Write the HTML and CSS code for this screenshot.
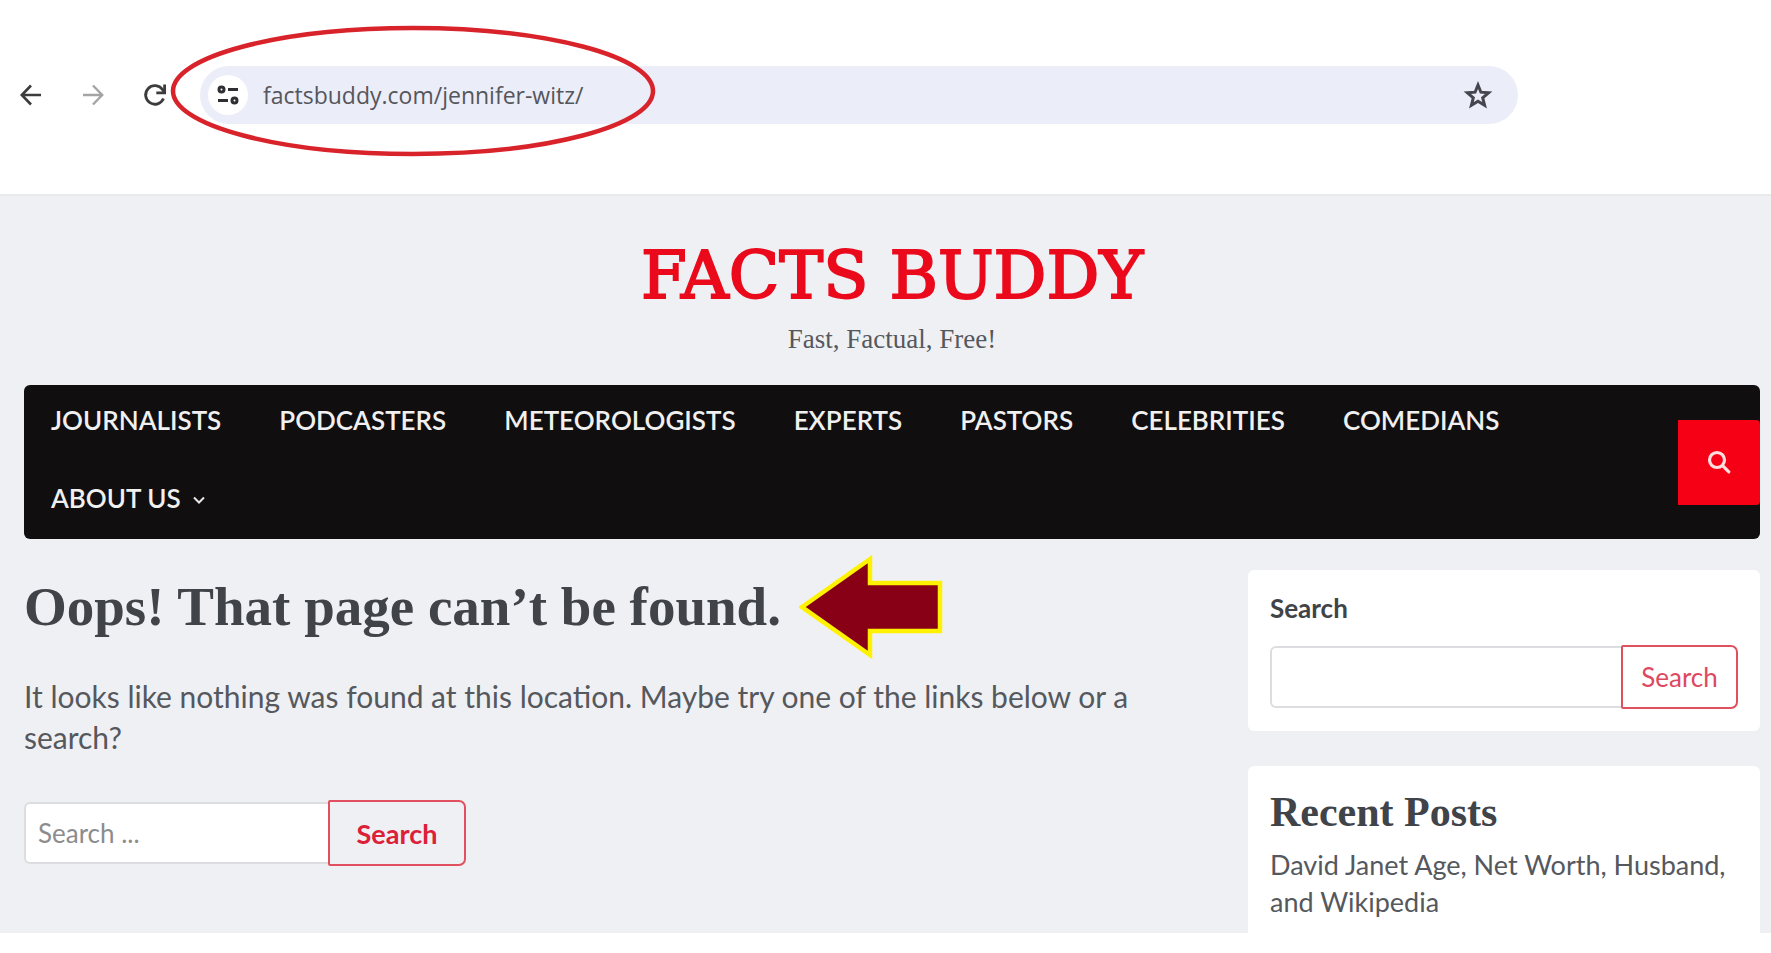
FILE: index.html
```
<!DOCTYPE html>
<html lang="en">
<head>
<meta charset="utf-8">
<title>Page not found - Facts Buddy</title>
<link rel="stylesheet" href="styles.css">
</head>
<body>
<div class="toolbar">
  <button class="tool" type="button" aria-label="Back">
    <svg width="24" height="24" viewBox="0 0 24 24" fill="none" stroke="#3c3c3e" stroke-width="2.6"><path d="M22 12H3M12 2.500 2.800 12l9.200 9.500"/></svg>
  </button>
  <button class="tool" type="button" aria-label="Forward">
    <svg width="24" height="24" viewBox="0 0 24 24" fill="none" stroke="#a4a4a6" stroke-width="2.4"><path d="M2 12h19M12 2.500 21.200 12 12 21.500"/></svg>
  </button>
  <button class="tool" type="button" aria-label="Reload">
    <svg width="24" height="24" viewBox="0 0 24 24" fill="none" stroke="#3c3c3e" stroke-width="2.800"><path d="M20.500 15.500A9.300 9.300 0 1 1 19.500 6.500L21 9"/><path d="M21.600 1.500v8.300h-8.300"/></svg>
  </button>
  <div class="omnibox">
    <button class="site-info" type="button" aria-label="View site information">
      <svg width="24" height="22" viewBox="0 0 24 22" fill="none" stroke="#2f2f33" stroke-width="3"><circle cx="5.500" cy="5.500" r="2.500"/><path d="M12 5.500h10M2 16.500h10"/><circle cx="18.500" cy="16.500" r="2.500"/></svg>
    </button>
    <input class="url" type="text" aria-label="Address" value="factsbuddy.com/jennifer-witz/">
    <button class="star" type="button" aria-label="Bookmark this page">
      <svg width="30" height="28" viewBox="0 0 30 28" fill="none" stroke="#46464e" stroke-width="3"><path d="M15 4l2.900 7.200 7.700.6-5.900 5 1.900 7.500L15 20.200l-6.600 4.100 1.900-7.500-5.900-5 7.700-.6z"/></svg>
    </button>
  </div>
</div>

<div class="site">
  <header class="masthead">
    <a class="brand" href="#">FACTS BUDDY</a>
    <p class="tagline">Fast, Factual, Free!</p>
  </header>

  <nav class="nav">
    <ul class="menu">
      <li><a href="#">JOURNALISTS</a></li>
      <li><a href="#">PODCASTERS</a></li>
      <li><a href="#">METEOROLOGISTS</a></li>
      <li><a href="#">EXPERTS</a></li>
      <li><a href="#">PASTORS</a></li>
      <li><a href="#">CELEBRITIES</a></li>
      <li><a href="#">COMEDIANS</a></li>
      <li><a href="#">ABOUT US<svg class="chevron" width="12" height="8" viewBox="0 0 12 8" fill="none" stroke="#e8e8e8" stroke-width="2"><path d="M1 1.500l5 5 5-5"/></svg></a></li>
    </ul>
    <button class="nav-search" type="button" aria-label="Open search">
      <svg width="24" height="24" viewBox="0 0 24 24" fill="none" stroke="#ffdede" stroke-width="3.200" stroke-linecap="round"><circle cx="10" cy="10" r="7.500"/><path d="M15.800 15.800l6 6"/></svg>
    </button>
  </nav>

  <div class="columns">
    <main class="content">
      <div class="heading-row">
        <h1>Oops! That page can’t be found.</h1>
        <svg class="arrow" width="145" height="106" viewBox="0 0 145 106"><path d="M3 53 71 5v24h70v48H71v24z" fill="#880015" stroke="#fff200" stroke-width="4.500"/></svg>
      </div>
      <p class="lead">It looks like nothing was found at this location. Maybe try one of the links below or a search?</p>
      <form class="search">
        <input class="field" type="search" aria-label="Search for" placeholder="Search ...">
        <button class="submit" type="button">Search</button>
      </form>
    </main>
    <aside class="sidebar">
      <form class="card">
        <label class="card-label" for="side-search">Search</label>
        <div class="side-search">
          <input class="field" id="side-search" type="search">
          <button class="submit" type="button">Search</button>
        </div>
      </form>
      <section class="card recent">
        <h2>Recent Posts</h2>
        <a href="#">David Janet Age, Net Worth, Husband, and Wikipedia</a>
      </section>
    </aside>
  </div>
</div>
<svg class="ring" width="486" height="132" viewBox="0 0 486 132" fill="none" stroke="#d9232b" stroke-width="4.500"><ellipse cx="243" cy="66" rx="240" ry="63"/></svg>
</body>
</html>
```
FILE: styles.css
```
* {
  box-sizing: border-box;
}

body {
  position: relative;
  display: flex;
  flex-direction: column;
  min-height: 100vh;
  margin: 0;
  padding-bottom: 20px;
  background: #fff;
  color: #55585d;
  font-family: Lato, "Open Sans", sans-serif;
}

button,
input {
  margin: 0;
  font: inherit;
}

a {
  color: inherit;
  text-decoration: none;
}

.toolbar {
  display: flex;
  align-items: center;
  gap: 38px;
  padding: 66px 253px 70px 19px;
}

.tool,
.site-info,
.star {
  display: flex;
  align-items: center;
  justify-content: center;
  padding: 0;
  border: 0;
  background: none;
}

.omnibox {
  display: flex;
  flex: 1;
  align-items: center;
  height: 58px;
  padding: 0 25px 0 8px;
  border-radius: 29px;
  background: #ebedf8;
}

.tool + .omnibox {
  margin-left: -5px;
}

.site-info {
  width: 40px;
  height: 40px;
  border-radius: 50%;
  background: #fff;
}

.url {
  flex: 1;
  min-width: 0;
  padding: 0 15px;
  border: 0;
  background: none;
  color: #55565c;
  font-family: "Open Sans", sans-serif;
  font-size: 23px;
}

.site {
  display: flex;
  flex: 1;
  flex-direction: column;
  padding: 0 11px 0 24px;
  border-top: 2px solid #e9eaec;
  background: #eff0f4;
}

.masthead {
  padding: 40px 0 28px;
  text-align: center;
}

.brand {
  display: block;
  color: #ea0a1c;
  font-family: "DejaVu Serif", serif;
  font-size: 66px;
  line-height: 80px;
  -webkit-text-stroke: 2px #ea0a1c;
}

.tagline {
  margin: 6px 0 0;
  font-family: "Liberation Serif", serif;
  font-size: 27px;
  line-height: 35px;
}

.nav {
  display: flex;
  align-items: center;
  border-radius: 6px;
  background: #100e0f;
}

.menu {
  display: flex;
  flex: 1;
  flex-wrap: wrap;
  gap: 8px 58px;
  margin: 0;
  padding: 0 0 6px 27px;
  color: #f0f0f0;
  font-size: 26px;
  font-weight: 600;
  line-height: 70px;
  list-style: none;
}

.chevron {
  margin: 0 0 4px 12px;
}

.nav-search {
  display: flex;
  align-items: center;
  justify-content: center;
  width: 82px;
  height: 85px;
  border: 0;
  border-radius: 0 4px 4px 0;
  background: #f50014;
}

.columns {
  display: grid;
  flex: 1;
  grid-template-columns: minmax(0, 1fr) 512px;
  gap: 90px;
}

.content {
  padding-top: 15px;
}

.heading-row {
  display: flex;
  align-items: center;
  gap: 18px;
}

h1,
h2 {
  margin: 0;
  color: #404348;
  font-family: "Liberation Serif", serif;
  font-weight: 700;
}

h1 {
  font-size: 55px;
  line-height: 64px;
  white-space: nowrap;
}

.lead {
  margin: 16px 0 42px;
  font-size: 30px;
  line-height: 41px;
}

.search,
.side-search {
  display: flex;
  align-items: center;
}

.search {
  width: 442px;
}

.field {
  flex: 1;
  min-width: 0;
  height: 62px;
  padding: 0 12px;
  border: 2px solid #dcdde0;
  border-right: 0;
  border-radius: 6px 0 0 6px;
  background: #fff;
  font-size: 26px;
}

.field::placeholder {
  color: #8c8c8e;
}

.submit {
  width: 138px;
  height: 66px;
  padding: 0;
  border: 2px solid #e0505f;
  border-radius: 2px 7px 7px 2px;
  background: none;
  color: #dc2038;
  font-size: 27px;
  font-weight: 700;
}

.side-search .submit {
  width: 117px;
  height: 64px;
  color: #de4860;
  font-size: 26px;
  font-weight: 400;
}

.sidebar {
  display: flex;
  flex-direction: column;
  gap: 35px;
  padding-top: 31px;
}

.card {
  padding: 22px;
  border-radius: 6px;
  background: #fff;
}

.card-label {
  display: block;
  margin-bottom: 21px;
  color: #404348;
  font-size: 26px;
  font-weight: 700;
  line-height: 32px;
}

.recent {
  flex: 1;
  padding-bottom: 0;
  border-radius: 6px 6px 0 0;
  font-size: 27px;
  line-height: 37px;
}

h2 {
  margin-bottom: 10px;
  font-size: 42px;
  line-height: 48px;
}

.ring {
  position: absolute;
  top: 25px;
  left: 170px;
}
```
